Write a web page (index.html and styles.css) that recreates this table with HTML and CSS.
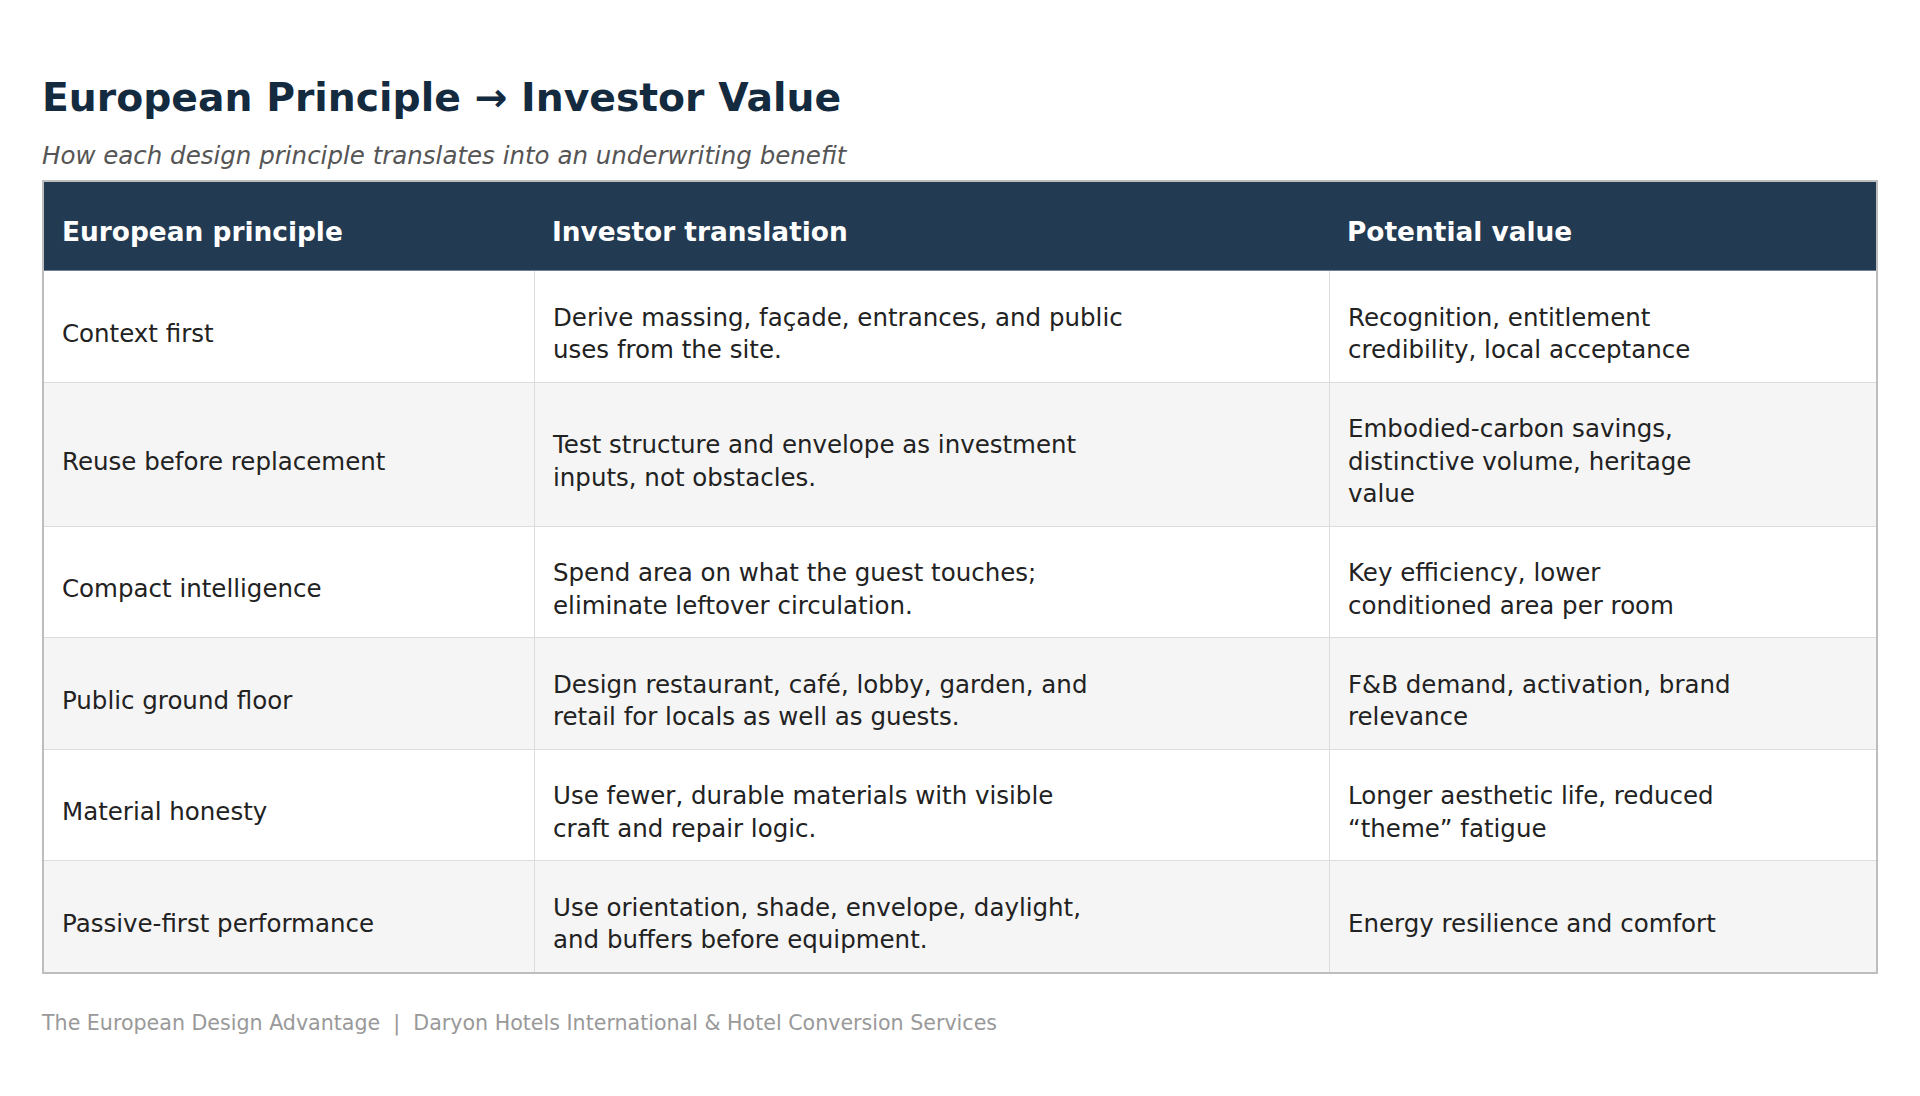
FILE: index.html
```html
<!DOCTYPE html>
<html lang="en">
<head>
<meta charset="utf-8">
<title>European Principle → Investor Value</title>
<link rel="stylesheet" href="styles.css">
</head>
<body>
<main class="page">
  <h1 class="title">European Principle → Investor Value</h1>
  <p class="subtitle">How each design principle translates into an underwriting benefit</p>
  <table class="matrix">
    <colgroup>
      <col class="col-principle">
      <col class="col-translation">
      <col class="col-value">
    </colgroup>
    <thead>
      <tr>
        <th>European principle</th>
        <th>Investor translation</th>
        <th>Potential value</th>
      </tr>
    </thead>
    <tbody>
      <tr>
        <td>Context first</td>
        <td>Derive massing, façade, entrances, and public<br>uses from the site.</td>
        <td>Recognition, entitlement<br>credibility, local acceptance</td>
      </tr>
      <tr>
        <td>Reuse before replacement</td>
        <td>Test structure and envelope as investment<br>inputs, not obstacles.</td>
        <td>Embodied-carbon savings,<br>distinctive volume, heritage<br>value</td>
      </tr>
      <tr>
        <td>Compact intelligence</td>
        <td>Spend area on what the guest touches;<br>eliminate leftover circulation.</td>
        <td>Key efficiency, lower<br>conditioned area per room</td>
      </tr>
      <tr>
        <td>Public ground floor</td>
        <td>Design restaurant, café, lobby, garden, and<br>retail for locals as well as guests.</td>
        <td>F&amp;B demand, activation, brand<br>relevance</td>
      </tr>
      <tr>
        <td>Material honesty</td>
        <td>Use fewer, durable materials with visible<br>craft and repair logic.</td>
        <td>Longer aesthetic life, reduced<br>“theme” fatigue</td>
      </tr>
      <tr>
        <td>Passive-first performance</td>
        <td>Use orientation, shade, envelope, daylight,<br>and buffers before equipment.</td>
        <td>Energy resilience and comfort</td>
      </tr>
    </tbody>
  </table>
  <footer class="footer">The European Design Advantage&nbsp;&nbsp;|&nbsp;&nbsp;Daryon Hotels International &amp; Hotel Conversion Services</footer>
</main>
</body>
</html>
```
FILE: styles.css
```css
* {
  box-sizing: border-box;
}

html, body {
  margin: 0;
  padding: 0;
  background: #ffffff;
}

body {
  font-family: "DejaVu Sans", "Liberation Sans", sans-serif;
  color: #222222;
}

.page {
  width: 1920px;
  height: 1096px;
  padding: 75px 42px 0 42px;
}

.title {
  margin: 0;
  font-size: 39.3px;
  line-height: 46px;
  font-weight: bold;
  color: #142a3e;
}

.subtitle {
  margin: 20.5px 0 0 0;
  font-size: 24.5px;
  line-height: 28px;
  font-style: italic;
  color: #555555;
}

.matrix {
  margin-top: 10.5px;
  width: 100%;
  table-layout: fixed;
  border-collapse: separate;
  border-spacing: 0;
  border: 2px solid #bdbdbd;
}

.col-principle {
  width: 490px;
}

.col-translation {
  width: 795px;
}

.col-value {
  width: auto;
}

.matrix th {
  background: #223a52;
  color: #ffffff;
  font-size: 26.4px;
  line-height: 34px;
  font-weight: bold;
  text-align: left;
  padding: 33px 18px 21px 18px;
  border-bottom: 1px solid #6f8193;
}

.matrix td {
  font-size: 24.5px;
  line-height: 32.5px;
  color: #222222;
  text-align: left;
  vertical-align: middle;
  padding: 30.5px 18px 15px 18px;
  border-bottom: 1px solid #dcdcdc;
}

.matrix td + td {
  border-left: 1px solid #dcdcdc;
}

.matrix tbody tr:nth-child(even) td {
  background: #f5f5f5;
}

.matrix tbody tr:last-child td {
  border-bottom: none;
}

.footer {
  margin-top: 37px;
  font-size: 20.6px;
  line-height: 24px;
  color: #999999;
}
```
